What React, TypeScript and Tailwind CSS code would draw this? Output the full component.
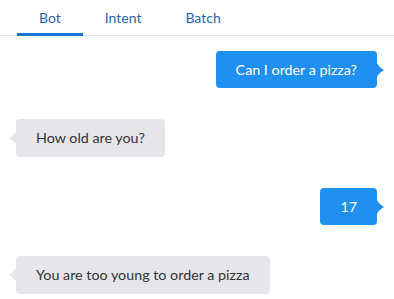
import React from "react";

const font = { fontFamily: 'Lato, "Open Sans", sans-serif' };

function RightArrow() {
  return (
    <svg width="9" height="18" viewBox="0 0 9 18" className="absolute right-[-8px] top-1/2 -translate-y-1/2">
      <path d="M0 0 C1 3 3 6 8 9 C3 12 1 15 0 18 Z" fill="#1f8ff0" />
    </svg>
  );
}

function LeftArrow() {
  return (
    <svg width="9" height="18" viewBox="0 0 9 18" className="absolute left-[-8px] top-1/2 -translate-y-1/2">
      <path d="M9 0 C8 3 6 6 1 9 C6 12 8 15 9 18 Z" fill="#e6e6ea" />
    </svg>
  );
}

function Sent({ text }: { text: string }) {
  return (
    <div className="flex justify-end">
      <div className="relative h-[37px] px-5 flex items-center rounded bg-[#1f8ff0] text-white text-[14.3px]">
        {text}
        <RightArrow />
      </div>
    </div>
  );
}

function Received({ text }: { text: string }) {
  return (
    <div className="flex justify-start">
      <div className="relative h-[38px] px-5 flex items-center rounded bg-[#e6e6ea] text-[#333] text-[14.3px]">
        {text}
        <LeftArrow />
      </div>
    </div>
  );
}

export default function App() {
  return (
    <div className="w-[394px] h-[299px] bg-white overflow-hidden" style={font}>
      <div className="flex h-[36px] border-b border-[#dde3ea] pl-[17px]">
        {["Bot", "Intent", "Batch"].map((t, i) => (
          <div key={t} className="relative px-[22px] flex items-center text-[14px] text-[#1f66ad]">
            {t}
            {i === 0 && <div className="absolute left-0 right-0 bottom-[-1px] h-[3px] bg-[#1976d2]" />}
          </div>
        ))}
      </div>
      <div className="flex flex-col gap-[31px] pt-[15px] pl-[16px] pr-[17px]">
        <Sent text="Can I order a pizza?" />
        <Received text="How old are you?" />
        <Sent text="17" />
        <Received text="You are too young to order a pizza" />
      </div>
    </div>
  );
}
